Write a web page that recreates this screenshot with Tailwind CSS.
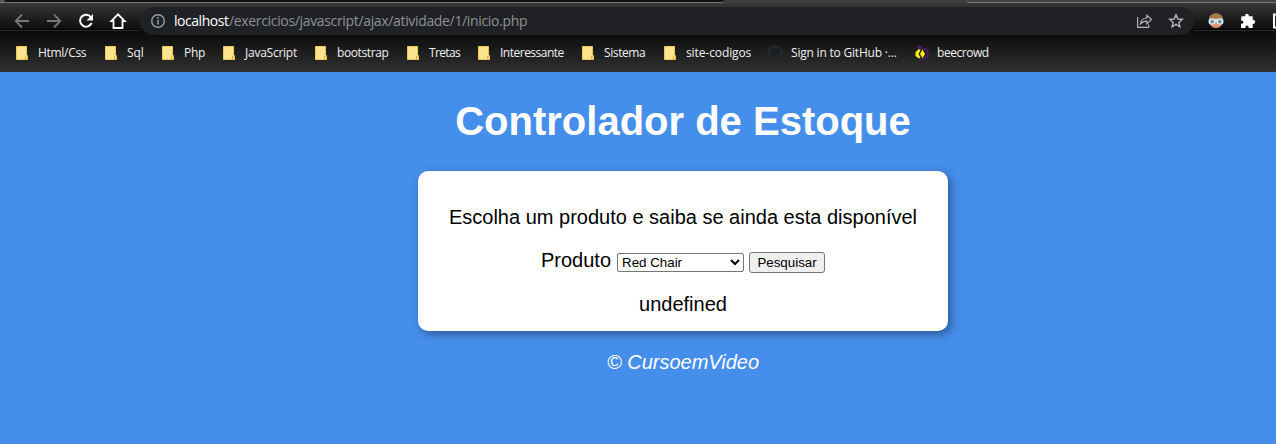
<!DOCTYPE html>
<html lang="pt-br">
<head>
<meta charset="utf-8">
<title>Controlador de Estoque</title>
<script src="https://cdn.jsdelivr.net/npm/@tailwindcss/browser@4"></script>
</head>
<body class="h-[444px] w-[1276px] overflow-hidden bg-[#468eec] font-['Liberation_Sans',Arial,sans-serif]">
<svg class="hidden"><symbol id="folder" viewBox="0 0 12 14"><path d="M.5.5h10v9h1v4H.5z" fill="#ffe490" stroke="#edc751"/><path d="M9.5 13V10.5h1" fill="none" stroke="#d9ad35"/></symbol></svg>
<header class="flex h-[72px] flex-col">
  <div class="flex h-[3px] shrink-0 justify-between bg-[#3e3e3e]">
    <div class="flex w-[724px] rounded-br-[4px] border-b border-[#777] bg-[#111]"><div class="h-[2px] w-[5px] rounded-br-full bg-[#555]"></div></div>
    <div class="w-[310px] rounded-bl-[4px] border-b border-[#777] bg-[#444]"></div>
  </div>
  <div class="flex h-8 shrink-0 bg-linear-to-b from-[#383838] from-0% via-[#0b0b0b] via-88% to-[#101010]">
    <div class="flex w-[140px] shrink-0">
      <svg width="140" height="32" viewBox="0 3 140 32" fill="none">
        <path d="M0 29.5h140" stroke="#000"/><path d="M0 30.5h140" stroke="#292929"/>
        <path d="M29 21H16M22 14.5 15.7 21l6.3 6.5M47 21h13M54 14.5l6.3 6.5-6.3 6.5" stroke="#777" stroke-width="1.8"/>
        <path d="M91 17.2A6 6 0 1 0 91.6 23" stroke="#fff" stroke-width="2"/><path d="M93 14v6.5h-6.5z" fill="#fff"/>
        <path d="M113.500 21v7h9v-7h2.200L118 14.300 111.300 21z" stroke="#fff" stroke-width="1.800"/>
      </svg>
    </div>
    <div class="mt-1 flex h-7 w-[1054px] shrink-0 items-center rounded-full bg-[#202124]">
      <svg class="ml-[10px] shrink-0" width="16" height="16" viewBox="0 0 16 16" fill="none" stroke="#9aa0a6"><circle cx="8" cy="8" r="6.3" stroke-width="1.4"/><path d="M8 7v4.5M8 4.3v1.6" stroke-width="1.5"/></svg>
      <div class="ml-2 w-[962px] shrink-0 whitespace-nowrap font-['Open_Sans','Noto_Sans',sans-serif] text-sm leading-7 text-[#8e9296]"><span class="inline-block w-[55px] tracking-[-0.47px] text-white">localhost</span><span class="tracking-[-0.34px]">/exercicios/javascript/ajax/atividade/1/inicio.php</span></div>
      <svg class="shrink-0" width="50" height="18" viewBox="1136 12 50 18" fill="none" stroke="#b4b6b9" stroke-width="1.2">
        <path d="M1137.6 17v10.4h11.2v-3M1140.5 24c.3-4 2.6-6 6.4-6v-2.7l4.6 4.3-4.6 4.3v-2.7c-2.8-.1-4.8.7-6.4 2.8z"/>
        <path d="m1176 14.8 1.8 4.2 4.5.4-3.4 3 1 4.4-3.9-2.4-3.9 2.4 1-4.4-3.4-3 4.5-.4z" stroke-width="1.4"/>
      </svg>
    </div>
    <svg class="shrink-0" width="82" height="32" viewBox="1194 3 82 32" fill="none">
      <path d="M1190 29.5h86" stroke="#000"/><path d="M1190 30.5h86" stroke="#292929"/>
      <circle cx="1216" cy="21" r="7" fill="#dc956f"/><path d="M1209 20c-1-9 15-9 14 0-3-2-11-2-14 0z" fill="#a17b4b"/>
      <rect x="1208.5" y="18.5" width="7" height="6" rx="3" fill="#e8eeee"/><rect x="1216.5" y="18.5" width="7" height="6" rx="3" fill="#e8eeee"/><path d="M1214 20.5h4" stroke="#e8eeee" stroke-width="2"/><circle cx="1212.2" cy="21.6" r="1.9" fill="#5d9cac"/><circle cx="1219.8" cy="21.6" r="1.9" fill="#5d9cac"/>
      <path d="M1241.500 16.300h3.700c-.8-3.400 4.400-3.400 3.600 0h3.900v3.600c3.300-.5 3.300 4.500 0 4v4.100h-4c.3-3.400-3.600-3.400-3.300 0H1241v-4.200c3.200.3 3.200-3.600 0-3.300z" fill="#fff"/>
      <path d="M1276 14.5h-2v13h2" stroke="#fff" stroke-width="2"/>
    </svg>
  </div>
  <nav class="flex h-[37px] shrink-0 items-center border-b border-[#292d34] bg-linear-to-b from-[#0e0e0e] to-[#303030] pl-4 font-['Open_Sans','Noto_Sans',sans-serif] text-xs whitespace-nowrap text-[#f0f0f0]">
    <div class="flex w-[89px] shrink-0 items-center gap-[10px]"><svg width="12" height="14"><use href="#folder"/></svg><span class="tracking-[-0.3px]">Html/Css</span></div>
    <div class="flex w-[57px] shrink-0 items-center gap-[10px]"><svg width="12" height="14"><use href="#folder"/></svg><span class="tracking-[-0.1px]">Sql</span></div>
    <div class="flex w-[61px] shrink-0 items-center gap-[10px]"><svg width="12" height="14"><use href="#folder"/></svg><span class="tracking-[-0.3px]">Php</span></div>
    <div class="flex w-[92px] shrink-0 items-center gap-[10px]"><svg width="12" height="14"><use href="#folder"/></svg><span class="tracking-[-0.25px]">JavaScript</span></div>
    <div class="flex w-[92px] shrink-0 items-center gap-[10px]"><svg width="12" height="14"><use href="#folder"/></svg><span class="tracking-[-0.4px]">bootstrap</span></div>
    <div class="flex w-[71px] shrink-0 items-center gap-[10px]"><svg width="12" height="14"><use href="#folder"/></svg><span class="tracking-[-0.65px]">Tretas</span></div>
    <div class="flex w-[104px] shrink-0 items-center gap-[10px]"><svg width="12" height="14"><use href="#folder"/></svg><span class="tracking-[-0.5px]">Interessante</span></div>
    <div class="flex w-[82px] shrink-0 items-center gap-[10px]"><svg width="12" height="14"><use href="#folder"/></svg><span class="tracking-[-0.4px]">Sistema</span></div>
    <div class="flex w-[103px] shrink-0 items-center gap-[10px]"><svg width="12" height="14"><use href="#folder"/></svg><span class="tracking-[-0.1px]">site-codigos</span></div>
    <div class="flex w-[148px] shrink-0 items-center gap-2"><svg width="16" height="16" viewBox="0 0 16 16" fill="#20272e"><path fill-rule="evenodd" d="M8 0C3.58 0 0 3.58 0 8c0 3.54 2.29 6.53 5.47 7.59.4.07.55-.17.55-.38 0-.19-.01-.82-.01-1.49-2.01.37-2.53-.49-2.69-.94-.09-.23-.48-.94-.82-1.13-.28-.15-.68-.52-.01-.53.63-.01 1.08.58 1.23.82.72 1.21 1.87.87 2.33.66.07-.52.28-.87.51-1.07-1.78-.2-3.64-.89-3.64-3.95 0-.87.31-1.59.82-2.15-.08-.2-.36-1.02.08-2.12 0 0 .67-.21 2.2.82a7.6 7.6 0 0 1 4 0c1.53-1.04 2.2-.82 2.2-.82.44 1.1.16 1.92.08 2.12.51.56.82 1.27.82 2.15 0 3.07-1.87 3.75-3.65 3.95.29.25.54.73.54 1.48 0 1.07-.01 1.93-.01 2.2 0 .21.15.46.55.38A8.01 8.01 0 0 0 16 8c0-4.42-3.58-8-8-8z"/></svg><span class="tracking-[-0.2px]">Sign in to GitHub ·...</span></div>
    <div class="-ml-px flex shrink-0 items-center gap-2"><svg width="15" height="16" viewBox="0 0 15 16" fill="none"><path d="M4 4 4.500 1.500 7 2v2.500M8 5c3-2.500 6 0 6 4s-3.500 5.500-6 3.500" stroke="#5b2180" stroke-width="1.300"/><path d="M5 4 1.500 7v4L5 13.500l1.500-1L4.500 9 6.500 5zM8.500 4.500 6 9l2.500 4L11 9z" fill="#ffed18"/><path d="M5 14l2.500 1.200L9 14" stroke="#5b2180"/></svg><span class="tracking-[-0.45px]">beecrowd</span></div>
  </nav>
</header>
<main class="flex w-full flex-col items-center pl-[90px] text-xl leading-[23px] text-black">
  <h1 class="mt-[26px] text-[40px] leading-[46px] font-bold text-white">Controlador de Estoque</h1>
  <section class="mt-[27px] flex h-40 w-[530px] flex-col items-center rounded-[10px] bg-white pt-[35px] shadow-[3px_3px_10px_rgba(0,0,0,0.38)]">
    <p>Escolha um produto e saiba se ainda esta disponível</p>
    <div class="mt-5 flex h-[23px] items-start">
      <label for="p">Produto</label>
      <select id="p" class="mt-1 ml-[6px] h-[19px] w-[127px] appearance-auto rounded-[2px] border border-[#767676] bg-white font-['Liberation_Sans'] text-[13.333px] leading-[17px]"><option>Red Chair</option></select>
      <button class="mt-[3px] ml-[5px] h-[21px] w-[76px] rounded-[3px] border border-[#767676] bg-[#efefef] text-[13.333px] leading-[19px]">Pesquisar</button>
    </div>
    <p class="mt-[21px]">undefined</p>
  </section>
  <footer class="mt-5 italic text-white">© CursoemVideo</footer>
</main>
</body>
</html>
